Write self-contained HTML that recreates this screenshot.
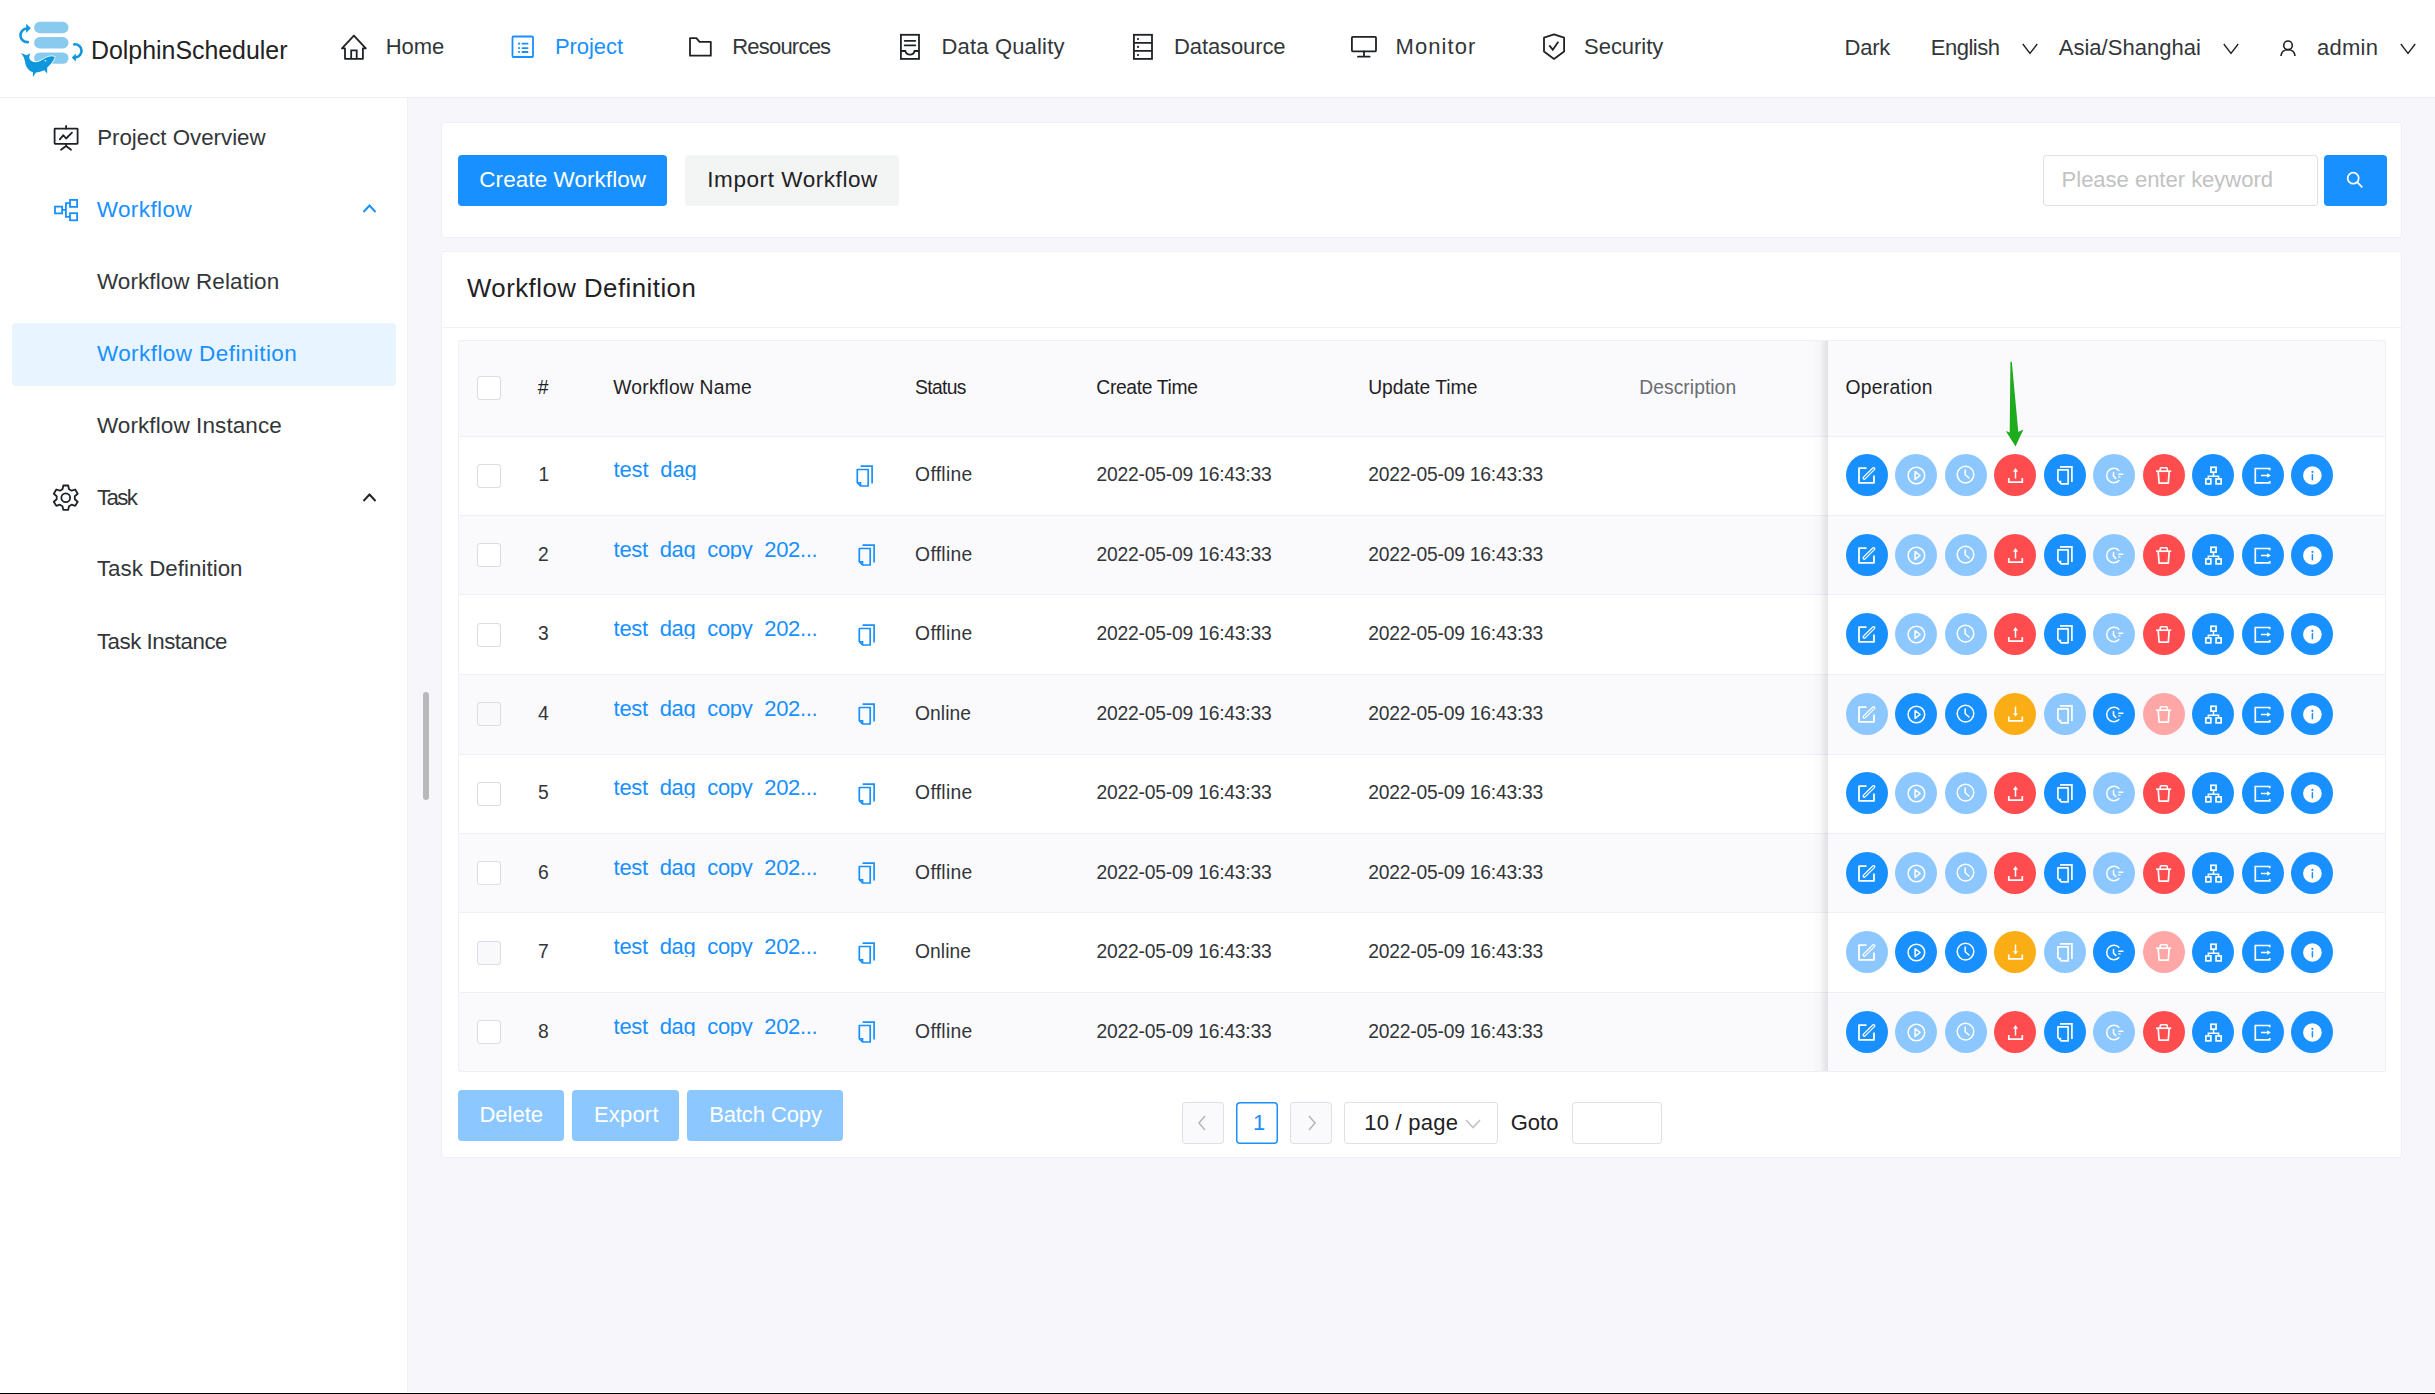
<!DOCTYPE html>
<html><head><meta charset="utf-8"><title>DolphinScheduler</title>
<style>
html,body{margin:0;padding:0;}
body{width:2435px;height:1394px;overflow:hidden;position:relative;background:#f7f6fb;font-family:"Liberation Sans", sans-serif;}
.t{position:absolute;white-space:nowrap;}
.b{position:absolute;}
.s{position:absolute;overflow:visible;}
</style></head><body>
<div class="b" style="left:0px;top:0px;width:2435px;height:97px;background:#fff;"></div>
<div class="b" style="left:0px;top:97px;width:2435px;height:1px;background:#efeff5;"></div>
<div class="b" style="left:0px;top:98px;width:407px;height:1296px;background:#fff;"></div>
<div class="b" style="left:407px;top:98px;width:1px;height:1296px;background:#efeff5;"></div>
<div class="b" style="left:423px;top:692px;width:6px;height:108px;background:#b9b9bc;border-radius:3px;"></div>
<svg class="s" style="left:0px;top:0px;" width="90" height="90" viewBox="0 0 90 90">
<rect x="34.1" y="21.8" width="34.4" height="11.4" rx="5.7" fill="#89cbee"/>
<rect x="34.1" y="37.1" width="34.4" height="11.4" rx="5.7" fill="#89cbee"/>
<rect x="34.1" y="52.4" width="34.4" height="11.4" rx="5.7" fill="#89cbee"/>
<path d="M27.8 42.1 A 6.8 6.8 0 1 1 26.8 28.5" fill="none" stroke="#0f97dd" stroke-width="2.6" stroke-linecap="round"/>
<path d="M26.3 23.8 L30.8 28.3 L26 32.9 Z" fill="#0f97dd"/>
<path d="M74.3 44.3 A 6.5 6.5 0 1 1 75.6 57.4" fill="none" stroke="#0f97dd" stroke-width="2.6" stroke-linecap="round"/>
<path d="M71.8 57.5 L75.8 53.5 L75.8 61.8 Z" fill="#0f97dd"/>
<path d="M21 52.9 L26.5 55.3 L30 53.2 L29.2 57.8 C30 60.8 32.5 62.3 36 62.2 C39.5 62 42 60 45 58.3 C48 56.5 51.5 55.5 54.8 56.8 C54 60.5 51 64.5 47.2 67.5 L47.2 73.4 L44.2 70.3 C41.5 71.5 38.5 72.3 36 72.6 L32.8 76.9 L33 72.3 C29.5 71.2 26.8 68.5 25.6 64.5 C25 62 24.6 59.5 23.8 57.3 Z" fill="#0f97dd" stroke="#fff" stroke-width="1.3" paint-order="stroke"/>
<circle cx="45.4" cy="60.8" r="0.8" fill="#fff"/>
</svg>
<div class="t" style="left:91.0px;top:37.72px;font-size:24.9px;line-height:24.9px;color:#222;letter-spacing:-0.004px;">DolphinScheduler</div>
<svg class="s" style="left:341px;top:30px;" width="26" height="30" viewBox="0 0 26 30"><path d="M4 18.4 H1 L12.9 5.6 L24.8 18.4 H21.9 V28.8 H4 Z" fill="none" stroke="#1f2225" stroke-width="1.8" stroke-linejoin="round"/><path d="M10.2 28.8 V20.3 H15.7 V28.8" fill="none" stroke="#1f2225" stroke-width="1.8"/></svg>
<div class="t" style="left:385.8px;top:35.58px;font-size:22px;line-height:22px;color:#333639;letter-spacing:-0.065px;">Home</div>
<svg class="s" style="left:511px;top:35px;" width="24" height="24" viewBox="0 0 24 24"><rect x="1.5" y="1.5" width="20.5" height="20.5" rx="1" fill="none" stroke="#1890ff" stroke-width="1.8"/><circle cx="8" cy="8.7" r="1.1" fill="#1890ff"/><circle cx="8" cy="13.1" r="1.1" fill="#1890ff"/><circle cx="8" cy="17" r="1.1" fill="#1890ff"/><path d="M11.4 8.7 H16.6 M11.4 13.1 H16.6 M11.4 17 H16.6" stroke="#1890ff" stroke-width="1.8" stroke-linecap="round"/></svg>
<div class="t" style="left:555.0px;top:35.58px;font-size:22px;line-height:22px;color:#1890ff;letter-spacing:-0.077px;">Project</div>
<svg class="s" style="left:688px;top:36px;" width="25" height="22" viewBox="0 0 25 22"><path d="M2 2.2 H8.4 L11.5 5.9 H22.8 V19.7 H2 Z" fill="none" stroke="#1f2225" stroke-width="1.8" stroke-linejoin="round"/></svg>
<div class="t" style="left:732.2px;top:35.58px;font-size:22px;line-height:22px;color:#333639;letter-spacing:-0.783px;">Resources</div>
<svg class="s" style="left:899px;top:33px;" width="22" height="28" viewBox="0 0 22 28"><rect x="1.9" y="1.8" width="18.1" height="24.1" fill="none" stroke="#1f2225" stroke-width="1.8"/><path d="M5.7 7.8 H16.3 M5.7 12.4 H16.3" stroke="#1f2225" stroke-width="1.8" stroke-linecap="round"/><path d="M1.9 18 H6.3 C7 20.5 8.5 21.7 11 21.7 C13.5 21.7 15 20.5 15.6 18 H20" fill="none" stroke="#1f2225" stroke-width="1.8"/></svg>
<div class="t" style="left:941.5px;top:35.58px;font-size:22px;line-height:22px;color:#333639;letter-spacing:0.169px;">Data Quality</div>
<svg class="s" style="left:1132px;top:33px;" width="22" height="28" viewBox="0 0 22 28"><rect x="1.9" y="1.8" width="18.1" height="24.1" fill="none" stroke="#1f2225" stroke-width="1.8"/><path d="M1.9 9.9 H20 M1.9 17.9 H20" stroke="#1f2225" stroke-width="1.8"/><circle cx="6" cy="6" r="1.1" fill="#1f2225"/><circle cx="6" cy="13.9" r="1.1" fill="#1f2225"/><circle cx="6" cy="22" r="1.1" fill="#1f2225"/></svg>
<div class="t" style="left:1174.0px;top:35.58px;font-size:22px;line-height:22px;color:#333639;letter-spacing:-0.101px;">Datasource</div>
<svg class="s" style="left:1350px;top:35px;" width="28" height="24" viewBox="0 0 28 24"><rect x="1.9" y="1.9" width="24.1" height="14.4" rx="0.8" fill="none" stroke="#1f2225" stroke-width="1.8"/><path d="M14 16.3 V21.7 M8 21.7 H19.6" stroke="#1f2225" stroke-width="1.8" stroke-linecap="round"/></svg>
<div class="t" style="left:1395.5px;top:35.58px;font-size:22px;line-height:22px;color:#333639;letter-spacing:1.072px;">Monitor</div>
<svg class="s" style="left:1542px;top:33px;" width="24" height="28" viewBox="0 0 24 28"><path d="M12 1.4 L22.1 4.7 V18.6 L12 25.9 L2 18.6 V4.7 Z" fill="none" stroke="#1f2225" stroke-width="1.8" stroke-linejoin="round"/><path d="M7.3 12.4 L10.8 16.8 L16.3 8.8" fill="none" stroke="#1f2225" stroke-width="1.8"/></svg>
<div class="t" style="left:1584.1px;top:35.58px;font-size:22px;line-height:22px;color:#333639;letter-spacing:-0.052px;">Security</div>
<div class="t" style="left:1844.5px;top:37.18px;font-size:22px;line-height:22px;color:#333639;letter-spacing:-0.195px;">Dark</div>
<div class="t" style="left:1930.8px;top:37.18px;font-size:22px;line-height:22px;color:#333639;letter-spacing:-0.493px;">English</div>
<svg class="s" style="left:2021.5px;top:43px;" width="16" height="12" viewBox="0 0 16 12"><path d="M0.8 1 L8 10.4 L15.2 1" fill="none" stroke="#1f2225" stroke-width="1.4"/></svg>
<div class="t" style="left:2058.7px;top:37.18px;font-size:22px;line-height:22px;color:#333639;letter-spacing:0.035px;">Asia/Shanghai</div>
<svg class="s" style="left:2222.5px;top:43px;" width="16" height="12" viewBox="0 0 16 12"><path d="M0.8 1 L8 10.4 L15.2 1" fill="none" stroke="#1f2225" stroke-width="1.4"/></svg>
<svg class="s" style="left:2279.5px;top:40px;" width="16" height="17" viewBox="0 0 16 17"><circle cx="8" cy="5.3" r="4.3" fill="none" stroke="#1f2225" stroke-width="1.6"/><path d="M1 16 C1.5 11.5 4.5 9.8 8 9.8 C11.5 9.8 14.5 11.5 15 16" fill="none" stroke="#1f2225" stroke-width="1.6"/></svg>
<div class="t" style="left:2316.9px;top:37.18px;font-size:22px;line-height:22px;color:#333639;letter-spacing:0.293px;">admin</div>
<svg class="s" style="left:2399.5px;top:43px;" width="16" height="12" viewBox="0 0 16 12"><path d="M0.8 1 L8 10.4 L15.2 1" fill="none" stroke="#1f2225" stroke-width="1.4"/></svg>
<svg class="s" style="left:53px;top:125px;" width="27" height="27" viewBox="0 0 27 27"><rect x="1.6" y="3.6" width="23" height="15.2" rx="0.5" fill="none" stroke="#1f2225" stroke-width="1.8"/><path d="M13.1 1 V3.6 M13.1 18.8 V21 L8 24.7 M13.1 21 L18 24.7" fill="none" stroke="#1f2225" stroke-width="1.8" stroke-linecap="round"/><path d="M6.8 14.4 L10.4 10.2 L13.1 13.5 L19 7.6" fill="none" stroke="#1f2225" stroke-width="1.8" stroke-linecap="round" stroke-linejoin="round"/></svg>
<div class="t" style="left:97.2px;top:127.12px;font-size:22.3px;line-height:22.3px;color:#333639;letter-spacing:-0.006px;">Project Overview</div>
<svg class="s" style="left:53px;top:199px;" width="27" height="23" viewBox="0 0 27 23"><rect x="2" y="7.6" width="7.1" height="6.8" fill="none" stroke="#1890ff" stroke-width="1.8"/><rect x="17" y="0.9" width="7.1" height="7" fill="none" stroke="#1890ff" stroke-width="1.8"/><rect x="17" y="14.2" width="7.1" height="7.1" fill="none" stroke="#1890ff" stroke-width="1.8"/><path d="M9.1 10.8 H12.9 M17 4.2 H12.9 V17.8 H17" fill="none" stroke="#1890ff" stroke-width="1.8"/></svg>
<div class="t" style="left:96.7px;top:198.95px;font-size:22.5px;line-height:22.5px;color:#1890ff;letter-spacing:0.420px;">Workflow</div>
<svg class="s" style="left:361.5px;top:203px;" width="15" height="12" viewBox="0 0 15 12"><path d="M1.5 9 L7.5 2.5 L13.5 9" fill="none" stroke="#1890ff" stroke-width="1.9"/></svg>
<div class="t" style="left:96.9px;top:271.35px;font-size:22.5px;line-height:22.5px;color:#333639;letter-spacing:0.087px;">Workflow Relation</div>
<div class="b" style="left:12px;top:323px;width:384px;height:63px;background:#e8f4ff;border-radius:4px;"></div>
<div class="t" style="left:96.9px;top:342.75px;font-size:22.5px;line-height:22.5px;color:#1890ff;letter-spacing:0.431px;">Workflow Definition</div>
<div class="t" style="left:96.9px;top:414.75px;font-size:22.5px;line-height:22.5px;color:#333639;letter-spacing:0.094px;">Workflow Instance</div>
<svg class="s" style="left:53.3px;top:484.3px;" width="26" height="28" viewBox="0 0 26 28"><path d="M10.3 1.5 H15.2 L16 5.2 L18.6 6.7 L22.2 5.5 L24.7 9.7 L21.8 12.2 V15.2 L24.7 17.7 L22.2 21.9 L18.6 20.7 L16 22.2 L15.2 25.9 H10.3 L9.5 22.2 L6.9 20.7 L3.3 21.9 L0.8 17.7 L3.7 15.2 V12.2 L0.8 9.7 L3.3 5.5 L6.9 6.7 L9.5 5.2 Z" fill="none" stroke="#1f2225" stroke-width="1.8" stroke-linejoin="round"/><circle cx="12.75" cy="13.7" r="4.4" fill="none" stroke="#1f2225" stroke-width="1.8"/></svg>
<div class="t" style="left:96.9px;top:487.12px;font-size:22.3px;line-height:22.3px;color:#333639;letter-spacing:-1.631px;">Task</div>
<svg class="s" style="left:361.5px;top:491.5px;" width="15" height="12" viewBox="0 0 15 12"><path d="M1.5 9 L7.5 2.5 L13.5 9" fill="none" stroke="#1f2225" stroke-width="1.9"/></svg>
<div class="t" style="left:96.9px;top:558.42px;font-size:22.3px;line-height:22.3px;color:#333639;letter-spacing:0.042px;">Task Definition</div>
<div class="t" style="left:96.9px;top:630.62px;font-size:22.3px;line-height:22.3px;color:#333639;letter-spacing:-0.479px;">Task Instance</div>
<div class="b" style="left:441px;top:122px;width:1961px;height:116px;background:#fff;box-shadow:inset 0 0 0 1px #efeff5;border-radius:4px;"></div>
<div class="b" style="left:441px;top:251px;width:1961px;height:907px;background:#fff;box-shadow:inset 0 0 0 1px #efeff5;border-radius:4px;"></div>
<div class="b" style="left:458px;top:155px;width:209px;height:51px;background:#1890ff;border-radius:4px;"></div>
<div class="t" style="left:479.3px;top:169.05px;font-size:22.5px;line-height:22.5px;color:#fff;letter-spacing:0.062px;">Create Workflow</div>
<div class="b" style="left:685px;top:155px;width:214px;height:51px;background:#f3f4f4;border-radius:4px;"></div>
<div class="t" style="left:707.3px;top:169.05px;font-size:22.5px;line-height:22.5px;color:#1f2225;letter-spacing:0.566px;">Import Workflow</div>
<div class="b" style="left:2043px;top:155px;width:275px;height:51px;background:#fff;box-shadow:inset 0 0 0 1px #e0e0e6;border-radius:4px;"></div>
<div class="t" style="left:2061.6px;top:168.58px;font-size:22px;line-height:22px;color:#c2c2c2;letter-spacing:-0.008px;">Please enter keyword</div>
<div class="b" style="left:2324px;top:155px;width:63px;height:51px;background:#1890ff;border-radius:4px;"></div>
<svg class="s" style="left:2346px;top:171px;" width="18" height="18" viewBox="0 0 18 18"><circle cx="7.2" cy="7.2" r="5.5" fill="none" stroke="#fff" stroke-width="1.7"/><path d="M11.2 11.2 L16.3 16.3" stroke="#fff" stroke-width="1.7"/></svg>
<div class="t" style="left:467.0px;top:275.76px;font-size:25.8px;line-height:25.8px;color:#1f2225;letter-spacing:0.470px;">Workflow Definition</div>
<div class="b" style="left:443px;top:327px;width:1958px;height:1px;background:#efeff5;"></div>
<div class="b" style="left:458px;top:340px;width:1928px;height:732px;background:#fff;box-shadow:inset 0 0 0 1px #efeff5;border-radius:4px;overflow:hidden;"></div>
<div class="b" style="left:459px;top:341px;width:1926px;height:95px;background:#fafafc;border-radius:3px 3px 0 0;"></div>
<div class="b" style="left:459px;top:436px;width:1926px;height:1px;background:#efeff5;"></div>
<div class="b" style="left:459px;top:515px;width:1926px;height:79px;background:#fafafc;"></div>
<div class="b" style="left:459px;top:515px;width:1926px;height:1px;background:#efeff5;"></div>
<div class="b" style="left:459px;top:594px;width:1926px;height:1px;background:#efeff5;"></div>
<div class="b" style="left:459px;top:674px;width:1926px;height:80px;background:#fafafc;"></div>
<div class="b" style="left:459px;top:674px;width:1926px;height:1px;background:#efeff5;"></div>
<div class="b" style="left:459px;top:754px;width:1926px;height:1px;background:#efeff5;"></div>
<div class="b" style="left:459px;top:833px;width:1926px;height:79px;background:#fafafc;"></div>
<div class="b" style="left:459px;top:833px;width:1926px;height:1px;background:#efeff5;"></div>
<div class="b" style="left:459px;top:912px;width:1926px;height:1px;background:#efeff5;"></div>
<div class="b" style="left:459px;top:992px;width:1926px;height:80px;background:#fafafc;"></div>
<div class="b" style="left:459px;top:992px;width:1926px;height:1px;background:#efeff5;"></div>
<div class="b" style="left:458px;top:340px;width:1928px;height:732px;box-shadow:inset 0 0 0 1px #efeff5;border-radius:4px;"></div>
<div class="b" style="left:1812px;top:341px;width:15.5px;height:730px;background:linear-gradient(to right, rgba(0,0,30,0), rgba(0,0,30,0.02) 50%, rgba(0,0,30,0.1));"></div>
<div class="b" style="left:477px;top:376px;width:24px;height:24px;background:#fff;box-shadow:inset 0 0 0 1px #dcdce2;border-radius:3.5px;"></div>
<div class="t" style="left:537.7px;top:377.56px;font-size:19.3px;line-height:19.3px;color:#1f2225;letter-spacing:0.000px;">#</div>
<div class="t" style="left:613.2px;top:377.56px;font-size:19.3px;line-height:19.3px;color:#1f2225;letter-spacing:0.237px;">Workflow Name</div>
<div class="t" style="left:915.1px;top:377.56px;font-size:19.3px;line-height:19.3px;color:#1f2225;letter-spacing:-0.663px;">Status</div>
<div class="t" style="left:1096.3px;top:377.56px;font-size:19.3px;line-height:19.3px;color:#1f2225;letter-spacing:-0.331px;">Create Time</div>
<div class="t" style="left:1368.2px;top:377.56px;font-size:19.3px;line-height:19.3px;color:#1f2225;letter-spacing:-0.011px;">Update Time</div>
<div class="t" style="left:1639.3px;top:377.56px;font-size:19.3px;line-height:19.3px;color:#6b6e72;letter-spacing:0.036px;">Description</div>
<div class="t" style="left:1845.6px;top:377.56px;font-size:19.3px;line-height:19.3px;color:#1f2225;letter-spacing:0.279px;">Operation</div>
<div class="b" style="left:477px;top:464px;width:24px;height:24px;background:#fff;box-shadow:inset 0 0 0 1px #dcdce2;border-radius:3.5px;"></div>
<div class="t" style="left:538.5px;top:465.11px;font-size:19.3px;line-height:19.3px;color:#333639;">1</div>
<div class="t" style="left:613.60px;top:459.13px;height:20.72px;overflow:hidden;font-size:22px;line-height:22px;letter-spacing:-0.185px;color:#1890ff;">test_dag</div>
<svg class="s" style="left:855.5px;top:465px;" width="18" height="23" viewBox="0 0 18 23"><path d="M4.6 1.1 H16.1 V18.4" fill="none" stroke="#1890ff" stroke-width="1.7"/><path d="M1.3 4.5 H12.2 V21 H4.6 L1.3 17.7 Z" fill="none" stroke="#1890ff" stroke-width="1.7" stroke-linejoin="round"/><path d="M1.3 17.7 H4.6 V21" fill="none" stroke="#1890ff" stroke-width="1.5"/></svg>
<div class="t" style="left:915.1px;top:465.41px;font-size:19.3px;line-height:19.3px;color:#333639;letter-spacing:0.295px;">Offline</div>
<div class="t" style="left:1096.6px;top:465.41px;font-size:19.3px;line-height:19.3px;color:#333639;letter-spacing:-0.218px;">2022-05-09 16:43:33</div>
<div class="t" style="left:1368.2px;top:465.41px;font-size:19.3px;line-height:19.3px;color:#333639;letter-spacing:-0.218px;">2022-05-09 16:43:33</div>
<svg class="s" style="left:1846px;top:454.0px;" width="42" height="42" viewBox="0 0 42 42"><circle cx="21" cy="21" r="21" fill="#1890ff"/><g transform="translate(0,-0.9)"><path d="M20.5 15.1 H13 V29.7 H28 V22.3" fill="none" stroke="#fff" stroke-width="1.8" stroke-linejoin="round"/><path d="M18.3 24.9 L27.6 15.7" stroke="#fff" stroke-width="3.6" stroke-linecap="round"/><path d="M18.3 24.9 L27.6 15.7" stroke="#1890ff" stroke-width="1.1" stroke-linecap="round"/></g></svg>
<svg class="s" style="left:1895px;top:454.0px;" width="42" height="42" viewBox="0 0 42 42"><circle cx="21" cy="21" r="21" fill="#8cc8ff"/><g transform="translate(0,-0.9)"><circle cx="21.4" cy="22.4" r="8.3" fill="none" stroke="#fff" stroke-width="1.5"/><path d="M20.1 18.6 V26.3 L25.1 22.4 Z" fill="none" stroke="#fff" stroke-width="1.5" stroke-linejoin="round"/></g></svg>
<svg class="s" style="left:1945px;top:454.0px;" width="42" height="42" viewBox="0 0 42 42"><circle cx="21" cy="21" r="21" fill="#8cc8ff"/><g transform="translate(0,-0.9)"><circle cx="20.5" cy="21.5" r="8.3" fill="none" stroke="#fff" stroke-width="1.5"/><path d="M20.2 17 V21.6 L24 24.9" fill="none" stroke="#fff" stroke-width="1.5" stroke-linecap="round"/></g></svg>
<svg class="s" style="left:1994px;top:454.0px;" width="42" height="42" viewBox="0 0 42 42"><circle cx="21" cy="21" r="21" fill="#ff4d4f"/><g transform="translate(0,-0.9)"><path d="M14.8 24.8 V29 H28.3 V24.8" fill="none" stroke="#fff" stroke-width="1.7"/><path d="M21.5 25.5 V17.5" stroke="#fff" stroke-width="1.5"/><path d="M21.5 15 L24 18.6 H19 Z" fill="#fff"/></g></svg>
<svg class="s" style="left:2044px;top:454.0px;" width="42" height="42" viewBox="0 0 42 42"><circle cx="21" cy="21" r="21" fill="#1890ff"/><g transform="translate(0,-0.9)"><path d="M16 13.8 H27.9 V29" fill="none" stroke="#fff" stroke-width="1.7"/><path d="M13.9 16.8 H24.1 V30.8 H17.3 L13.9 27.4 Z" fill="none" stroke="#fff" stroke-width="1.7" stroke-linejoin="round"/><circle cx="16.4" cy="28.4" r="0.9" fill="#fff"/></g></svg>
<svg class="s" style="left:2093px;top:454.0px;" width="42" height="42" viewBox="0 0 42 42"><circle cx="21" cy="21" r="21" fill="#8cc8ff"/><g transform="translate(0,-0.9)"><path d="M26.3 17.6 A 7.2 7.2 0 1 0 26.3 27.2" fill="none" stroke="#fff" stroke-width="1.5"/><path d="M20.5 19.3 V23 L22.8 25.4" fill="none" stroke="#fff" stroke-width="1.5" stroke-linecap="round"/><path d="M25.3 21.1 H30.4 M25.3 23.8 H27.6" stroke="#fff" stroke-width="1.4"/></g></svg>
<svg class="s" style="left:2143px;top:454.0px;" width="42" height="42" viewBox="0 0 42 42"><circle cx="21" cy="21" r="21" fill="#ff4d4f"/><g transform="translate(0,-0.9)"><path d="M13 18.1 H28.2" stroke="#fff" stroke-width="1.7"/><path d="M17.2 18.1 V15.6 Q17.2 14.6 18.2 14.6 H23.3 Q24.3 14.6 24.3 15.6 V18.1" fill="none" stroke="#fff" stroke-width="1.5"/><path d="M15.2 18.1 L16.1 30.1 H25.3 L26.2 18.1" fill="none" stroke="#fff" stroke-width="1.7" stroke-linejoin="round"/></g></svg>
<svg class="s" style="left:2192px;top:454.0px;" width="42" height="42" viewBox="0 0 42 42"><circle cx="21" cy="21" r="21" fill="#1890ff"/><g transform="translate(0,-0.9)"><rect x="18.95" y="14.15" width="5.1" height="4.9" fill="none" stroke="#fff" stroke-width="1.7"/><rect x="13.85" y="25.85" width="5" height="4.9" fill="none" stroke="#fff" stroke-width="1.7"/><rect x="24.05" y="25.85" width="5.1" height="4.9" fill="none" stroke="#fff" stroke-width="1.7"/><path d="M21.5 19.9 V23.2 M16.35 25 V23.2 H26.6 V25" fill="none" stroke="#fff" stroke-width="1.5"/></g></svg>
<svg class="s" style="left:2242px;top:454.0px;" width="42" height="42" viewBox="0 0 42 42"><circle cx="21" cy="21" r="21" fill="#1890ff"/><g transform="translate(0,-0.9)"><path d="M27.7 17.2 V15.4 H13.3 V29.8 H27.7 V27.9" fill="none" stroke="#fff" stroke-width="1.7"/><path d="M19 22.4 H26" stroke="#fff" stroke-width="1.5"/><path d="M28.9 22.4 L25.2 20.2 V24.7 Z" fill="#fff"/></g></svg>
<svg class="s" style="left:2291px;top:454.0px;" width="42" height="42" viewBox="0 0 42 42"><circle cx="21" cy="21" r="21" fill="#1890ff"/><g transform="translate(0,-0.9)"><circle cx="21.4" cy="22.4" r="9.3" fill="#fff"/><circle cx="21.4" cy="18.8" r="1.05" fill="#1890ff"/><path d="M21.4 21.6 V26.7" stroke="#1890ff" stroke-width="1.5" stroke-linecap="round"/></g></svg>
<div class="b" style="left:477px;top:543px;width:24px;height:24px;background:#fff;box-shadow:inset 0 0 0 1px #dcdce2;border-radius:3.5px;"></div>
<div class="t" style="left:538px;top:544.61px;font-size:19.3px;line-height:19.3px;color:#333639;">2</div>
<div class="t" style="left:613.60px;top:538.63px;height:20.72px;overflow:hidden;font-size:22px;line-height:22px;letter-spacing:-0.331px;color:#1890ff;">test_dag_copy_202...</div>
<svg class="s" style="left:858.3px;top:544px;" width="18" height="23" viewBox="0 0 18 23"><path d="M4.6 1.1 H16.1 V18.4" fill="none" stroke="#1890ff" stroke-width="1.7"/><path d="M1.3 4.5 H12.2 V21 H4.6 L1.3 17.7 Z" fill="none" stroke="#1890ff" stroke-width="1.7" stroke-linejoin="round"/><path d="M1.3 17.7 H4.6 V21" fill="none" stroke="#1890ff" stroke-width="1.5"/></svg>
<div class="t" style="left:915.1px;top:544.91px;font-size:19.3px;line-height:19.3px;color:#333639;letter-spacing:0.295px;">Offline</div>
<div class="t" style="left:1096.6px;top:544.91px;font-size:19.3px;line-height:19.3px;color:#333639;letter-spacing:-0.218px;">2022-05-09 16:43:33</div>
<div class="t" style="left:1368.2px;top:544.91px;font-size:19.3px;line-height:19.3px;color:#333639;letter-spacing:-0.218px;">2022-05-09 16:43:33</div>
<svg class="s" style="left:1846px;top:534.0px;" width="42" height="42" viewBox="0 0 42 42"><circle cx="21" cy="21" r="21" fill="#1890ff"/><g transform="translate(0,-0.9)"><path d="M20.5 15.1 H13 V29.7 H28 V22.3" fill="none" stroke="#fff" stroke-width="1.8" stroke-linejoin="round"/><path d="M18.3 24.9 L27.6 15.7" stroke="#fff" stroke-width="3.6" stroke-linecap="round"/><path d="M18.3 24.9 L27.6 15.7" stroke="#1890ff" stroke-width="1.1" stroke-linecap="round"/></g></svg>
<svg class="s" style="left:1895px;top:534.0px;" width="42" height="42" viewBox="0 0 42 42"><circle cx="21" cy="21" r="21" fill="#8cc8ff"/><g transform="translate(0,-0.9)"><circle cx="21.4" cy="22.4" r="8.3" fill="none" stroke="#fff" stroke-width="1.5"/><path d="M20.1 18.6 V26.3 L25.1 22.4 Z" fill="none" stroke="#fff" stroke-width="1.5" stroke-linejoin="round"/></g></svg>
<svg class="s" style="left:1945px;top:534.0px;" width="42" height="42" viewBox="0 0 42 42"><circle cx="21" cy="21" r="21" fill="#8cc8ff"/><g transform="translate(0,-0.9)"><circle cx="20.5" cy="21.5" r="8.3" fill="none" stroke="#fff" stroke-width="1.5"/><path d="M20.2 17 V21.6 L24 24.9" fill="none" stroke="#fff" stroke-width="1.5" stroke-linecap="round"/></g></svg>
<svg class="s" style="left:1994px;top:534.0px;" width="42" height="42" viewBox="0 0 42 42"><circle cx="21" cy="21" r="21" fill="#ff4d4f"/><g transform="translate(0,-0.9)"><path d="M14.8 24.8 V29 H28.3 V24.8" fill="none" stroke="#fff" stroke-width="1.7"/><path d="M21.5 25.5 V17.5" stroke="#fff" stroke-width="1.5"/><path d="M21.5 15 L24 18.6 H19 Z" fill="#fff"/></g></svg>
<svg class="s" style="left:2044px;top:534.0px;" width="42" height="42" viewBox="0 0 42 42"><circle cx="21" cy="21" r="21" fill="#1890ff"/><g transform="translate(0,-0.9)"><path d="M16 13.8 H27.9 V29" fill="none" stroke="#fff" stroke-width="1.7"/><path d="M13.9 16.8 H24.1 V30.8 H17.3 L13.9 27.4 Z" fill="none" stroke="#fff" stroke-width="1.7" stroke-linejoin="round"/><circle cx="16.4" cy="28.4" r="0.9" fill="#fff"/></g></svg>
<svg class="s" style="left:2093px;top:534.0px;" width="42" height="42" viewBox="0 0 42 42"><circle cx="21" cy="21" r="21" fill="#8cc8ff"/><g transform="translate(0,-0.9)"><path d="M26.3 17.6 A 7.2 7.2 0 1 0 26.3 27.2" fill="none" stroke="#fff" stroke-width="1.5"/><path d="M20.5 19.3 V23 L22.8 25.4" fill="none" stroke="#fff" stroke-width="1.5" stroke-linecap="round"/><path d="M25.3 21.1 H30.4 M25.3 23.8 H27.6" stroke="#fff" stroke-width="1.4"/></g></svg>
<svg class="s" style="left:2143px;top:534.0px;" width="42" height="42" viewBox="0 0 42 42"><circle cx="21" cy="21" r="21" fill="#ff4d4f"/><g transform="translate(0,-0.9)"><path d="M13 18.1 H28.2" stroke="#fff" stroke-width="1.7"/><path d="M17.2 18.1 V15.6 Q17.2 14.6 18.2 14.6 H23.3 Q24.3 14.6 24.3 15.6 V18.1" fill="none" stroke="#fff" stroke-width="1.5"/><path d="M15.2 18.1 L16.1 30.1 H25.3 L26.2 18.1" fill="none" stroke="#fff" stroke-width="1.7" stroke-linejoin="round"/></g></svg>
<svg class="s" style="left:2192px;top:534.0px;" width="42" height="42" viewBox="0 0 42 42"><circle cx="21" cy="21" r="21" fill="#1890ff"/><g transform="translate(0,-0.9)"><rect x="18.95" y="14.15" width="5.1" height="4.9" fill="none" stroke="#fff" stroke-width="1.7"/><rect x="13.85" y="25.85" width="5" height="4.9" fill="none" stroke="#fff" stroke-width="1.7"/><rect x="24.05" y="25.85" width="5.1" height="4.9" fill="none" stroke="#fff" stroke-width="1.7"/><path d="M21.5 19.9 V23.2 M16.35 25 V23.2 H26.6 V25" fill="none" stroke="#fff" stroke-width="1.5"/></g></svg>
<svg class="s" style="left:2242px;top:534.0px;" width="42" height="42" viewBox="0 0 42 42"><circle cx="21" cy="21" r="21" fill="#1890ff"/><g transform="translate(0,-0.9)"><path d="M27.7 17.2 V15.4 H13.3 V29.8 H27.7 V27.9" fill="none" stroke="#fff" stroke-width="1.7"/><path d="M19 22.4 H26" stroke="#fff" stroke-width="1.5"/><path d="M28.9 22.4 L25.2 20.2 V24.7 Z" fill="#fff"/></g></svg>
<svg class="s" style="left:2291px;top:534.0px;" width="42" height="42" viewBox="0 0 42 42"><circle cx="21" cy="21" r="21" fill="#1890ff"/><g transform="translate(0,-0.9)"><circle cx="21.4" cy="22.4" r="9.3" fill="#fff"/><circle cx="21.4" cy="18.8" r="1.05" fill="#1890ff"/><path d="M21.4 21.6 V26.7" stroke="#1890ff" stroke-width="1.5" stroke-linecap="round"/></g></svg>
<div class="b" style="left:477px;top:623px;width:24px;height:24px;background:#fff;box-shadow:inset 0 0 0 1px #dcdce2;border-radius:3.5px;"></div>
<div class="t" style="left:538px;top:624.11px;font-size:19.3px;line-height:19.3px;color:#333639;">3</div>
<div class="t" style="left:613.60px;top:618.13px;height:20.72px;overflow:hidden;font-size:22px;line-height:22px;letter-spacing:-0.331px;color:#1890ff;">test_dag_copy_202...</div>
<svg class="s" style="left:858.3px;top:624px;" width="18" height="23" viewBox="0 0 18 23"><path d="M4.6 1.1 H16.1 V18.4" fill="none" stroke="#1890ff" stroke-width="1.7"/><path d="M1.3 4.5 H12.2 V21 H4.6 L1.3 17.7 Z" fill="none" stroke="#1890ff" stroke-width="1.7" stroke-linejoin="round"/><path d="M1.3 17.7 H4.6 V21" fill="none" stroke="#1890ff" stroke-width="1.5"/></svg>
<div class="t" style="left:915.1px;top:624.41px;font-size:19.3px;line-height:19.3px;color:#333639;letter-spacing:0.295px;">Offline</div>
<div class="t" style="left:1096.6px;top:624.41px;font-size:19.3px;line-height:19.3px;color:#333639;letter-spacing:-0.218px;">2022-05-09 16:43:33</div>
<div class="t" style="left:1368.2px;top:624.41px;font-size:19.3px;line-height:19.3px;color:#333639;letter-spacing:-0.218px;">2022-05-09 16:43:33</div>
<svg class="s" style="left:1846px;top:613.0px;" width="42" height="42" viewBox="0 0 42 42"><circle cx="21" cy="21" r="21" fill="#1890ff"/><g transform="translate(0,-0.9)"><path d="M20.5 15.1 H13 V29.7 H28 V22.3" fill="none" stroke="#fff" stroke-width="1.8" stroke-linejoin="round"/><path d="M18.3 24.9 L27.6 15.7" stroke="#fff" stroke-width="3.6" stroke-linecap="round"/><path d="M18.3 24.9 L27.6 15.7" stroke="#1890ff" stroke-width="1.1" stroke-linecap="round"/></g></svg>
<svg class="s" style="left:1895px;top:613.0px;" width="42" height="42" viewBox="0 0 42 42"><circle cx="21" cy="21" r="21" fill="#8cc8ff"/><g transform="translate(0,-0.9)"><circle cx="21.4" cy="22.4" r="8.3" fill="none" stroke="#fff" stroke-width="1.5"/><path d="M20.1 18.6 V26.3 L25.1 22.4 Z" fill="none" stroke="#fff" stroke-width="1.5" stroke-linejoin="round"/></g></svg>
<svg class="s" style="left:1945px;top:613.0px;" width="42" height="42" viewBox="0 0 42 42"><circle cx="21" cy="21" r="21" fill="#8cc8ff"/><g transform="translate(0,-0.9)"><circle cx="20.5" cy="21.5" r="8.3" fill="none" stroke="#fff" stroke-width="1.5"/><path d="M20.2 17 V21.6 L24 24.9" fill="none" stroke="#fff" stroke-width="1.5" stroke-linecap="round"/></g></svg>
<svg class="s" style="left:1994px;top:613.0px;" width="42" height="42" viewBox="0 0 42 42"><circle cx="21" cy="21" r="21" fill="#ff4d4f"/><g transform="translate(0,-0.9)"><path d="M14.8 24.8 V29 H28.3 V24.8" fill="none" stroke="#fff" stroke-width="1.7"/><path d="M21.5 25.5 V17.5" stroke="#fff" stroke-width="1.5"/><path d="M21.5 15 L24 18.6 H19 Z" fill="#fff"/></g></svg>
<svg class="s" style="left:2044px;top:613.0px;" width="42" height="42" viewBox="0 0 42 42"><circle cx="21" cy="21" r="21" fill="#1890ff"/><g transform="translate(0,-0.9)"><path d="M16 13.8 H27.9 V29" fill="none" stroke="#fff" stroke-width="1.7"/><path d="M13.9 16.8 H24.1 V30.8 H17.3 L13.9 27.4 Z" fill="none" stroke="#fff" stroke-width="1.7" stroke-linejoin="round"/><circle cx="16.4" cy="28.4" r="0.9" fill="#fff"/></g></svg>
<svg class="s" style="left:2093px;top:613.0px;" width="42" height="42" viewBox="0 0 42 42"><circle cx="21" cy="21" r="21" fill="#8cc8ff"/><g transform="translate(0,-0.9)"><path d="M26.3 17.6 A 7.2 7.2 0 1 0 26.3 27.2" fill="none" stroke="#fff" stroke-width="1.5"/><path d="M20.5 19.3 V23 L22.8 25.4" fill="none" stroke="#fff" stroke-width="1.5" stroke-linecap="round"/><path d="M25.3 21.1 H30.4 M25.3 23.8 H27.6" stroke="#fff" stroke-width="1.4"/></g></svg>
<svg class="s" style="left:2143px;top:613.0px;" width="42" height="42" viewBox="0 0 42 42"><circle cx="21" cy="21" r="21" fill="#ff4d4f"/><g transform="translate(0,-0.9)"><path d="M13 18.1 H28.2" stroke="#fff" stroke-width="1.7"/><path d="M17.2 18.1 V15.6 Q17.2 14.6 18.2 14.6 H23.3 Q24.3 14.6 24.3 15.6 V18.1" fill="none" stroke="#fff" stroke-width="1.5"/><path d="M15.2 18.1 L16.1 30.1 H25.3 L26.2 18.1" fill="none" stroke="#fff" stroke-width="1.7" stroke-linejoin="round"/></g></svg>
<svg class="s" style="left:2192px;top:613.0px;" width="42" height="42" viewBox="0 0 42 42"><circle cx="21" cy="21" r="21" fill="#1890ff"/><g transform="translate(0,-0.9)"><rect x="18.95" y="14.15" width="5.1" height="4.9" fill="none" stroke="#fff" stroke-width="1.7"/><rect x="13.85" y="25.85" width="5" height="4.9" fill="none" stroke="#fff" stroke-width="1.7"/><rect x="24.05" y="25.85" width="5.1" height="4.9" fill="none" stroke="#fff" stroke-width="1.7"/><path d="M21.5 19.9 V23.2 M16.35 25 V23.2 H26.6 V25" fill="none" stroke="#fff" stroke-width="1.5"/></g></svg>
<svg class="s" style="left:2242px;top:613.0px;" width="42" height="42" viewBox="0 0 42 42"><circle cx="21" cy="21" r="21" fill="#1890ff"/><g transform="translate(0,-0.9)"><path d="M27.7 17.2 V15.4 H13.3 V29.8 H27.7 V27.9" fill="none" stroke="#fff" stroke-width="1.7"/><path d="M19 22.4 H26" stroke="#fff" stroke-width="1.5"/><path d="M28.9 22.4 L25.2 20.2 V24.7 Z" fill="#fff"/></g></svg>
<svg class="s" style="left:2291px;top:613.0px;" width="42" height="42" viewBox="0 0 42 42"><circle cx="21" cy="21" r="21" fill="#1890ff"/><g transform="translate(0,-0.9)"><circle cx="21.4" cy="22.4" r="9.3" fill="#fff"/><circle cx="21.4" cy="18.8" r="1.05" fill="#1890ff"/><path d="M21.4 21.6 V26.7" stroke="#1890ff" stroke-width="1.5" stroke-linecap="round"/></g></svg>
<div class="b" style="left:477px;top:702px;width:24px;height:24px;background:#f9f9fb;box-shadow:inset 0 0 0 1px #dcdce2;border-radius:3.5px;"></div>
<div class="t" style="left:538px;top:703.61px;font-size:19.3px;line-height:19.3px;color:#333639;">4</div>
<div class="t" style="left:613.60px;top:697.63px;height:20.72px;overflow:hidden;font-size:22px;line-height:22px;letter-spacing:-0.331px;color:#1890ff;">test_dag_copy_202...</div>
<svg class="s" style="left:858.3px;top:703px;" width="18" height="23" viewBox="0 0 18 23"><path d="M4.6 1.1 H16.1 V18.4" fill="none" stroke="#1890ff" stroke-width="1.7"/><path d="M1.3 4.5 H12.2 V21 H4.6 L1.3 17.7 Z" fill="none" stroke="#1890ff" stroke-width="1.7" stroke-linejoin="round"/><path d="M1.3 17.7 H4.6 V21" fill="none" stroke="#1890ff" stroke-width="1.5"/></svg>
<div class="t" style="left:915.1px;top:703.91px;font-size:19.3px;line-height:19.3px;color:#333639;letter-spacing:0.021px;">Online</div>
<div class="t" style="left:1096.6px;top:703.91px;font-size:19.3px;line-height:19.3px;color:#333639;letter-spacing:-0.218px;">2022-05-09 16:43:33</div>
<div class="t" style="left:1368.2px;top:703.91px;font-size:19.3px;line-height:19.3px;color:#333639;letter-spacing:-0.218px;">2022-05-09 16:43:33</div>
<svg class="s" style="left:1846px;top:693.0px;" width="42" height="42" viewBox="0 0 42 42"><circle cx="21" cy="21" r="21" fill="#8cc8ff"/><g transform="translate(0,-0.9)"><path d="M20.5 15.1 H13 V29.7 H28 V22.3" fill="none" stroke="#fff" stroke-width="1.8" stroke-linejoin="round"/><path d="M18.3 24.9 L27.6 15.7" stroke="#fff" stroke-width="3.6" stroke-linecap="round"/><path d="M18.3 24.9 L27.6 15.7" stroke="#8cc8ff" stroke-width="1.1" stroke-linecap="round"/></g></svg>
<svg class="s" style="left:1895px;top:693.0px;" width="42" height="42" viewBox="0 0 42 42"><circle cx="21" cy="21" r="21" fill="#1890ff"/><g transform="translate(0,-0.9)"><circle cx="21.4" cy="22.4" r="8.3" fill="none" stroke="#fff" stroke-width="1.5"/><path d="M20.1 18.6 V26.3 L25.1 22.4 Z" fill="none" stroke="#fff" stroke-width="1.5" stroke-linejoin="round"/></g></svg>
<svg class="s" style="left:1945px;top:693.0px;" width="42" height="42" viewBox="0 0 42 42"><circle cx="21" cy="21" r="21" fill="#1890ff"/><g transform="translate(0,-0.9)"><circle cx="20.5" cy="21.5" r="8.3" fill="none" stroke="#fff" stroke-width="1.5"/><path d="M20.2 17 V21.6 L24 24.9" fill="none" stroke="#fff" stroke-width="1.5" stroke-linecap="round"/></g></svg>
<svg class="s" style="left:1994px;top:693.0px;" width="42" height="42" viewBox="0 0 42 42"><circle cx="21" cy="21" r="21" fill="#faad14"/><path d="M14.8 23.5 V27.8 H28.3 V23.5" fill="none" stroke="#fff" stroke-width="1.7"/><path d="M21.5 13.5 V21" stroke="#fff" stroke-width="1.5"/><path d="M21.5 23.6 L24 20.2 H19 Z" fill="#fff"/></svg>
<svg class="s" style="left:2044px;top:693.0px;" width="42" height="42" viewBox="0 0 42 42"><circle cx="21" cy="21" r="21" fill="#8cc8ff"/><g transform="translate(0,-0.9)"><path d="M16 13.8 H27.9 V29" fill="none" stroke="#fff" stroke-width="1.7"/><path d="M13.9 16.8 H24.1 V30.8 H17.3 L13.9 27.4 Z" fill="none" stroke="#fff" stroke-width="1.7" stroke-linejoin="round"/><circle cx="16.4" cy="28.4" r="0.9" fill="#fff"/></g></svg>
<svg class="s" style="left:2093px;top:693.0px;" width="42" height="42" viewBox="0 0 42 42"><circle cx="21" cy="21" r="21" fill="#1890ff"/><g transform="translate(0,-0.9)"><path d="M26.3 17.6 A 7.2 7.2 0 1 0 26.3 27.2" fill="none" stroke="#fff" stroke-width="1.5"/><path d="M20.5 19.3 V23 L22.8 25.4" fill="none" stroke="#fff" stroke-width="1.5" stroke-linecap="round"/><path d="M25.3 21.1 H30.4 M25.3 23.8 H27.6" stroke="#fff" stroke-width="1.4"/></g></svg>
<svg class="s" style="left:2143px;top:693.0px;" width="42" height="42" viewBox="0 0 42 42"><circle cx="21" cy="21" r="21" fill="#ffa6a7"/><g transform="translate(0,-0.9)"><path d="M13 18.1 H28.2" stroke="#fff" stroke-width="1.7"/><path d="M17.2 18.1 V15.6 Q17.2 14.6 18.2 14.6 H23.3 Q24.3 14.6 24.3 15.6 V18.1" fill="none" stroke="#fff" stroke-width="1.5"/><path d="M15.2 18.1 L16.1 30.1 H25.3 L26.2 18.1" fill="none" stroke="#fff" stroke-width="1.7" stroke-linejoin="round"/></g></svg>
<svg class="s" style="left:2192px;top:693.0px;" width="42" height="42" viewBox="0 0 42 42"><circle cx="21" cy="21" r="21" fill="#1890ff"/><g transform="translate(0,-0.9)"><rect x="18.95" y="14.15" width="5.1" height="4.9" fill="none" stroke="#fff" stroke-width="1.7"/><rect x="13.85" y="25.85" width="5" height="4.9" fill="none" stroke="#fff" stroke-width="1.7"/><rect x="24.05" y="25.85" width="5.1" height="4.9" fill="none" stroke="#fff" stroke-width="1.7"/><path d="M21.5 19.9 V23.2 M16.35 25 V23.2 H26.6 V25" fill="none" stroke="#fff" stroke-width="1.5"/></g></svg>
<svg class="s" style="left:2242px;top:693.0px;" width="42" height="42" viewBox="0 0 42 42"><circle cx="21" cy="21" r="21" fill="#1890ff"/><g transform="translate(0,-0.9)"><path d="M27.7 17.2 V15.4 H13.3 V29.8 H27.7 V27.9" fill="none" stroke="#fff" stroke-width="1.7"/><path d="M19 22.4 H26" stroke="#fff" stroke-width="1.5"/><path d="M28.9 22.4 L25.2 20.2 V24.7 Z" fill="#fff"/></g></svg>
<svg class="s" style="left:2291px;top:693.0px;" width="42" height="42" viewBox="0 0 42 42"><circle cx="21" cy="21" r="21" fill="#1890ff"/><g transform="translate(0,-0.9)"><circle cx="21.4" cy="22.4" r="9.3" fill="#fff"/><circle cx="21.4" cy="18.8" r="1.05" fill="#1890ff"/><path d="M21.4 21.6 V26.7" stroke="#1890ff" stroke-width="1.5" stroke-linecap="round"/></g></svg>
<div class="b" style="left:477px;top:782px;width:24px;height:24px;background:#fff;box-shadow:inset 0 0 0 1px #dcdce2;border-radius:3.5px;"></div>
<div class="t" style="left:538px;top:783.11px;font-size:19.3px;line-height:19.3px;color:#333639;">5</div>
<div class="t" style="left:613.60px;top:777.13px;height:20.72px;overflow:hidden;font-size:22px;line-height:22px;letter-spacing:-0.331px;color:#1890ff;">test_dag_copy_202...</div>
<svg class="s" style="left:858.3px;top:783px;" width="18" height="23" viewBox="0 0 18 23"><path d="M4.6 1.1 H16.1 V18.4" fill="none" stroke="#1890ff" stroke-width="1.7"/><path d="M1.3 4.5 H12.2 V21 H4.6 L1.3 17.7 Z" fill="none" stroke="#1890ff" stroke-width="1.7" stroke-linejoin="round"/><path d="M1.3 17.7 H4.6 V21" fill="none" stroke="#1890ff" stroke-width="1.5"/></svg>
<div class="t" style="left:915.1px;top:783.41px;font-size:19.3px;line-height:19.3px;color:#333639;letter-spacing:0.295px;">Offline</div>
<div class="t" style="left:1096.6px;top:783.41px;font-size:19.3px;line-height:19.3px;color:#333639;letter-spacing:-0.218px;">2022-05-09 16:43:33</div>
<div class="t" style="left:1368.2px;top:783.41px;font-size:19.3px;line-height:19.3px;color:#333639;letter-spacing:-0.218px;">2022-05-09 16:43:33</div>
<svg class="s" style="left:1846px;top:772.0px;" width="42" height="42" viewBox="0 0 42 42"><circle cx="21" cy="21" r="21" fill="#1890ff"/><g transform="translate(0,-0.9)"><path d="M20.5 15.1 H13 V29.7 H28 V22.3" fill="none" stroke="#fff" stroke-width="1.8" stroke-linejoin="round"/><path d="M18.3 24.9 L27.6 15.7" stroke="#fff" stroke-width="3.6" stroke-linecap="round"/><path d="M18.3 24.9 L27.6 15.7" stroke="#1890ff" stroke-width="1.1" stroke-linecap="round"/></g></svg>
<svg class="s" style="left:1895px;top:772.0px;" width="42" height="42" viewBox="0 0 42 42"><circle cx="21" cy="21" r="21" fill="#8cc8ff"/><g transform="translate(0,-0.9)"><circle cx="21.4" cy="22.4" r="8.3" fill="none" stroke="#fff" stroke-width="1.5"/><path d="M20.1 18.6 V26.3 L25.1 22.4 Z" fill="none" stroke="#fff" stroke-width="1.5" stroke-linejoin="round"/></g></svg>
<svg class="s" style="left:1945px;top:772.0px;" width="42" height="42" viewBox="0 0 42 42"><circle cx="21" cy="21" r="21" fill="#8cc8ff"/><g transform="translate(0,-0.9)"><circle cx="20.5" cy="21.5" r="8.3" fill="none" stroke="#fff" stroke-width="1.5"/><path d="M20.2 17 V21.6 L24 24.9" fill="none" stroke="#fff" stroke-width="1.5" stroke-linecap="round"/></g></svg>
<svg class="s" style="left:1994px;top:772.0px;" width="42" height="42" viewBox="0 0 42 42"><circle cx="21" cy="21" r="21" fill="#ff4d4f"/><g transform="translate(0,-0.9)"><path d="M14.8 24.8 V29 H28.3 V24.8" fill="none" stroke="#fff" stroke-width="1.7"/><path d="M21.5 25.5 V17.5" stroke="#fff" stroke-width="1.5"/><path d="M21.5 15 L24 18.6 H19 Z" fill="#fff"/></g></svg>
<svg class="s" style="left:2044px;top:772.0px;" width="42" height="42" viewBox="0 0 42 42"><circle cx="21" cy="21" r="21" fill="#1890ff"/><g transform="translate(0,-0.9)"><path d="M16 13.8 H27.9 V29" fill="none" stroke="#fff" stroke-width="1.7"/><path d="M13.9 16.8 H24.1 V30.8 H17.3 L13.9 27.4 Z" fill="none" stroke="#fff" stroke-width="1.7" stroke-linejoin="round"/><circle cx="16.4" cy="28.4" r="0.9" fill="#fff"/></g></svg>
<svg class="s" style="left:2093px;top:772.0px;" width="42" height="42" viewBox="0 0 42 42"><circle cx="21" cy="21" r="21" fill="#8cc8ff"/><g transform="translate(0,-0.9)"><path d="M26.3 17.6 A 7.2 7.2 0 1 0 26.3 27.2" fill="none" stroke="#fff" stroke-width="1.5"/><path d="M20.5 19.3 V23 L22.8 25.4" fill="none" stroke="#fff" stroke-width="1.5" stroke-linecap="round"/><path d="M25.3 21.1 H30.4 M25.3 23.8 H27.6" stroke="#fff" stroke-width="1.4"/></g></svg>
<svg class="s" style="left:2143px;top:772.0px;" width="42" height="42" viewBox="0 0 42 42"><circle cx="21" cy="21" r="21" fill="#ff4d4f"/><g transform="translate(0,-0.9)"><path d="M13 18.1 H28.2" stroke="#fff" stroke-width="1.7"/><path d="M17.2 18.1 V15.6 Q17.2 14.6 18.2 14.6 H23.3 Q24.3 14.6 24.3 15.6 V18.1" fill="none" stroke="#fff" stroke-width="1.5"/><path d="M15.2 18.1 L16.1 30.1 H25.3 L26.2 18.1" fill="none" stroke="#fff" stroke-width="1.7" stroke-linejoin="round"/></g></svg>
<svg class="s" style="left:2192px;top:772.0px;" width="42" height="42" viewBox="0 0 42 42"><circle cx="21" cy="21" r="21" fill="#1890ff"/><g transform="translate(0,-0.9)"><rect x="18.95" y="14.15" width="5.1" height="4.9" fill="none" stroke="#fff" stroke-width="1.7"/><rect x="13.85" y="25.85" width="5" height="4.9" fill="none" stroke="#fff" stroke-width="1.7"/><rect x="24.05" y="25.85" width="5.1" height="4.9" fill="none" stroke="#fff" stroke-width="1.7"/><path d="M21.5 19.9 V23.2 M16.35 25 V23.2 H26.6 V25" fill="none" stroke="#fff" stroke-width="1.5"/></g></svg>
<svg class="s" style="left:2242px;top:772.0px;" width="42" height="42" viewBox="0 0 42 42"><circle cx="21" cy="21" r="21" fill="#1890ff"/><g transform="translate(0,-0.9)"><path d="M27.7 17.2 V15.4 H13.3 V29.8 H27.7 V27.9" fill="none" stroke="#fff" stroke-width="1.7"/><path d="M19 22.4 H26" stroke="#fff" stroke-width="1.5"/><path d="M28.9 22.4 L25.2 20.2 V24.7 Z" fill="#fff"/></g></svg>
<svg class="s" style="left:2291px;top:772.0px;" width="42" height="42" viewBox="0 0 42 42"><circle cx="21" cy="21" r="21" fill="#1890ff"/><g transform="translate(0,-0.9)"><circle cx="21.4" cy="22.4" r="9.3" fill="#fff"/><circle cx="21.4" cy="18.8" r="1.05" fill="#1890ff"/><path d="M21.4 21.6 V26.7" stroke="#1890ff" stroke-width="1.5" stroke-linecap="round"/></g></svg>
<div class="b" style="left:477px;top:861px;width:24px;height:24px;background:#fff;box-shadow:inset 0 0 0 1px #dcdce2;border-radius:3.5px;"></div>
<div class="t" style="left:538px;top:862.61px;font-size:19.3px;line-height:19.3px;color:#333639;">6</div>
<div class="t" style="left:613.60px;top:856.63px;height:20.72px;overflow:hidden;font-size:22px;line-height:22px;letter-spacing:-0.331px;color:#1890ff;">test_dag_copy_202...</div>
<svg class="s" style="left:858.3px;top:862px;" width="18" height="23" viewBox="0 0 18 23"><path d="M4.6 1.1 H16.1 V18.4" fill="none" stroke="#1890ff" stroke-width="1.7"/><path d="M1.3 4.5 H12.2 V21 H4.6 L1.3 17.7 Z" fill="none" stroke="#1890ff" stroke-width="1.7" stroke-linejoin="round"/><path d="M1.3 17.7 H4.6 V21" fill="none" stroke="#1890ff" stroke-width="1.5"/></svg>
<div class="t" style="left:915.1px;top:862.91px;font-size:19.3px;line-height:19.3px;color:#333639;letter-spacing:0.295px;">Offline</div>
<div class="t" style="left:1096.6px;top:862.91px;font-size:19.3px;line-height:19.3px;color:#333639;letter-spacing:-0.218px;">2022-05-09 16:43:33</div>
<div class="t" style="left:1368.2px;top:862.91px;font-size:19.3px;line-height:19.3px;color:#333639;letter-spacing:-0.218px;">2022-05-09 16:43:33</div>
<svg class="s" style="left:1846px;top:852.0px;" width="42" height="42" viewBox="0 0 42 42"><circle cx="21" cy="21" r="21" fill="#1890ff"/><g transform="translate(0,-0.9)"><path d="M20.5 15.1 H13 V29.7 H28 V22.3" fill="none" stroke="#fff" stroke-width="1.8" stroke-linejoin="round"/><path d="M18.3 24.9 L27.6 15.7" stroke="#fff" stroke-width="3.6" stroke-linecap="round"/><path d="M18.3 24.9 L27.6 15.7" stroke="#1890ff" stroke-width="1.1" stroke-linecap="round"/></g></svg>
<svg class="s" style="left:1895px;top:852.0px;" width="42" height="42" viewBox="0 0 42 42"><circle cx="21" cy="21" r="21" fill="#8cc8ff"/><g transform="translate(0,-0.9)"><circle cx="21.4" cy="22.4" r="8.3" fill="none" stroke="#fff" stroke-width="1.5"/><path d="M20.1 18.6 V26.3 L25.1 22.4 Z" fill="none" stroke="#fff" stroke-width="1.5" stroke-linejoin="round"/></g></svg>
<svg class="s" style="left:1945px;top:852.0px;" width="42" height="42" viewBox="0 0 42 42"><circle cx="21" cy="21" r="21" fill="#8cc8ff"/><g transform="translate(0,-0.9)"><circle cx="20.5" cy="21.5" r="8.3" fill="none" stroke="#fff" stroke-width="1.5"/><path d="M20.2 17 V21.6 L24 24.9" fill="none" stroke="#fff" stroke-width="1.5" stroke-linecap="round"/></g></svg>
<svg class="s" style="left:1994px;top:852.0px;" width="42" height="42" viewBox="0 0 42 42"><circle cx="21" cy="21" r="21" fill="#ff4d4f"/><g transform="translate(0,-0.9)"><path d="M14.8 24.8 V29 H28.3 V24.8" fill="none" stroke="#fff" stroke-width="1.7"/><path d="M21.5 25.5 V17.5" stroke="#fff" stroke-width="1.5"/><path d="M21.5 15 L24 18.6 H19 Z" fill="#fff"/></g></svg>
<svg class="s" style="left:2044px;top:852.0px;" width="42" height="42" viewBox="0 0 42 42"><circle cx="21" cy="21" r="21" fill="#1890ff"/><g transform="translate(0,-0.9)"><path d="M16 13.8 H27.9 V29" fill="none" stroke="#fff" stroke-width="1.7"/><path d="M13.9 16.8 H24.1 V30.8 H17.3 L13.9 27.4 Z" fill="none" stroke="#fff" stroke-width="1.7" stroke-linejoin="round"/><circle cx="16.4" cy="28.4" r="0.9" fill="#fff"/></g></svg>
<svg class="s" style="left:2093px;top:852.0px;" width="42" height="42" viewBox="0 0 42 42"><circle cx="21" cy="21" r="21" fill="#8cc8ff"/><g transform="translate(0,-0.9)"><path d="M26.3 17.6 A 7.2 7.2 0 1 0 26.3 27.2" fill="none" stroke="#fff" stroke-width="1.5"/><path d="M20.5 19.3 V23 L22.8 25.4" fill="none" stroke="#fff" stroke-width="1.5" stroke-linecap="round"/><path d="M25.3 21.1 H30.4 M25.3 23.8 H27.6" stroke="#fff" stroke-width="1.4"/></g></svg>
<svg class="s" style="left:2143px;top:852.0px;" width="42" height="42" viewBox="0 0 42 42"><circle cx="21" cy="21" r="21" fill="#ff4d4f"/><g transform="translate(0,-0.9)"><path d="M13 18.1 H28.2" stroke="#fff" stroke-width="1.7"/><path d="M17.2 18.1 V15.6 Q17.2 14.6 18.2 14.6 H23.3 Q24.3 14.6 24.3 15.6 V18.1" fill="none" stroke="#fff" stroke-width="1.5"/><path d="M15.2 18.1 L16.1 30.1 H25.3 L26.2 18.1" fill="none" stroke="#fff" stroke-width="1.7" stroke-linejoin="round"/></g></svg>
<svg class="s" style="left:2192px;top:852.0px;" width="42" height="42" viewBox="0 0 42 42"><circle cx="21" cy="21" r="21" fill="#1890ff"/><g transform="translate(0,-0.9)"><rect x="18.95" y="14.15" width="5.1" height="4.9" fill="none" stroke="#fff" stroke-width="1.7"/><rect x="13.85" y="25.85" width="5" height="4.9" fill="none" stroke="#fff" stroke-width="1.7"/><rect x="24.05" y="25.85" width="5.1" height="4.9" fill="none" stroke="#fff" stroke-width="1.7"/><path d="M21.5 19.9 V23.2 M16.35 25 V23.2 H26.6 V25" fill="none" stroke="#fff" stroke-width="1.5"/></g></svg>
<svg class="s" style="left:2242px;top:852.0px;" width="42" height="42" viewBox="0 0 42 42"><circle cx="21" cy="21" r="21" fill="#1890ff"/><g transform="translate(0,-0.9)"><path d="M27.7 17.2 V15.4 H13.3 V29.8 H27.7 V27.9" fill="none" stroke="#fff" stroke-width="1.7"/><path d="M19 22.4 H26" stroke="#fff" stroke-width="1.5"/><path d="M28.9 22.4 L25.2 20.2 V24.7 Z" fill="#fff"/></g></svg>
<svg class="s" style="left:2291px;top:852.0px;" width="42" height="42" viewBox="0 0 42 42"><circle cx="21" cy="21" r="21" fill="#1890ff"/><g transform="translate(0,-0.9)"><circle cx="21.4" cy="22.4" r="9.3" fill="#fff"/><circle cx="21.4" cy="18.8" r="1.05" fill="#1890ff"/><path d="M21.4 21.6 V26.7" stroke="#1890ff" stroke-width="1.5" stroke-linecap="round"/></g></svg>
<div class="b" style="left:477px;top:941px;width:24px;height:24px;background:#f9f9fb;box-shadow:inset 0 0 0 1px #dcdce2;border-radius:3.5px;"></div>
<div class="t" style="left:538px;top:942.11px;font-size:19.3px;line-height:19.3px;color:#333639;">7</div>
<div class="t" style="left:613.60px;top:936.13px;height:20.72px;overflow:hidden;font-size:22px;line-height:22px;letter-spacing:-0.331px;color:#1890ff;">test_dag_copy_202...</div>
<svg class="s" style="left:858.3px;top:942px;" width="18" height="23" viewBox="0 0 18 23"><path d="M4.6 1.1 H16.1 V18.4" fill="none" stroke="#1890ff" stroke-width="1.7"/><path d="M1.3 4.5 H12.2 V21 H4.6 L1.3 17.7 Z" fill="none" stroke="#1890ff" stroke-width="1.7" stroke-linejoin="round"/><path d="M1.3 17.7 H4.6 V21" fill="none" stroke="#1890ff" stroke-width="1.5"/></svg>
<div class="t" style="left:915.1px;top:942.41px;font-size:19.3px;line-height:19.3px;color:#333639;letter-spacing:0.021px;">Online</div>
<div class="t" style="left:1096.6px;top:942.41px;font-size:19.3px;line-height:19.3px;color:#333639;letter-spacing:-0.218px;">2022-05-09 16:43:33</div>
<div class="t" style="left:1368.2px;top:942.41px;font-size:19.3px;line-height:19.3px;color:#333639;letter-spacing:-0.218px;">2022-05-09 16:43:33</div>
<svg class="s" style="left:1846px;top:931.0px;" width="42" height="42" viewBox="0 0 42 42"><circle cx="21" cy="21" r="21" fill="#8cc8ff"/><g transform="translate(0,-0.9)"><path d="M20.5 15.1 H13 V29.7 H28 V22.3" fill="none" stroke="#fff" stroke-width="1.8" stroke-linejoin="round"/><path d="M18.3 24.9 L27.6 15.7" stroke="#fff" stroke-width="3.6" stroke-linecap="round"/><path d="M18.3 24.9 L27.6 15.7" stroke="#8cc8ff" stroke-width="1.1" stroke-linecap="round"/></g></svg>
<svg class="s" style="left:1895px;top:931.0px;" width="42" height="42" viewBox="0 0 42 42"><circle cx="21" cy="21" r="21" fill="#1890ff"/><g transform="translate(0,-0.9)"><circle cx="21.4" cy="22.4" r="8.3" fill="none" stroke="#fff" stroke-width="1.5"/><path d="M20.1 18.6 V26.3 L25.1 22.4 Z" fill="none" stroke="#fff" stroke-width="1.5" stroke-linejoin="round"/></g></svg>
<svg class="s" style="left:1945px;top:931.0px;" width="42" height="42" viewBox="0 0 42 42"><circle cx="21" cy="21" r="21" fill="#1890ff"/><g transform="translate(0,-0.9)"><circle cx="20.5" cy="21.5" r="8.3" fill="none" stroke="#fff" stroke-width="1.5"/><path d="M20.2 17 V21.6 L24 24.9" fill="none" stroke="#fff" stroke-width="1.5" stroke-linecap="round"/></g></svg>
<svg class="s" style="left:1994px;top:931.0px;" width="42" height="42" viewBox="0 0 42 42"><circle cx="21" cy="21" r="21" fill="#faad14"/><path d="M14.8 23.5 V27.8 H28.3 V23.5" fill="none" stroke="#fff" stroke-width="1.7"/><path d="M21.5 13.5 V21" stroke="#fff" stroke-width="1.5"/><path d="M21.5 23.6 L24 20.2 H19 Z" fill="#fff"/></svg>
<svg class="s" style="left:2044px;top:931.0px;" width="42" height="42" viewBox="0 0 42 42"><circle cx="21" cy="21" r="21" fill="#8cc8ff"/><g transform="translate(0,-0.9)"><path d="M16 13.8 H27.9 V29" fill="none" stroke="#fff" stroke-width="1.7"/><path d="M13.9 16.8 H24.1 V30.8 H17.3 L13.9 27.4 Z" fill="none" stroke="#fff" stroke-width="1.7" stroke-linejoin="round"/><circle cx="16.4" cy="28.4" r="0.9" fill="#fff"/></g></svg>
<svg class="s" style="left:2093px;top:931.0px;" width="42" height="42" viewBox="0 0 42 42"><circle cx="21" cy="21" r="21" fill="#1890ff"/><g transform="translate(0,-0.9)"><path d="M26.3 17.6 A 7.2 7.2 0 1 0 26.3 27.2" fill="none" stroke="#fff" stroke-width="1.5"/><path d="M20.5 19.3 V23 L22.8 25.4" fill="none" stroke="#fff" stroke-width="1.5" stroke-linecap="round"/><path d="M25.3 21.1 H30.4 M25.3 23.8 H27.6" stroke="#fff" stroke-width="1.4"/></g></svg>
<svg class="s" style="left:2143px;top:931.0px;" width="42" height="42" viewBox="0 0 42 42"><circle cx="21" cy="21" r="21" fill="#ffa6a7"/><g transform="translate(0,-0.9)"><path d="M13 18.1 H28.2" stroke="#fff" stroke-width="1.7"/><path d="M17.2 18.1 V15.6 Q17.2 14.6 18.2 14.6 H23.3 Q24.3 14.6 24.3 15.6 V18.1" fill="none" stroke="#fff" stroke-width="1.5"/><path d="M15.2 18.1 L16.1 30.1 H25.3 L26.2 18.1" fill="none" stroke="#fff" stroke-width="1.7" stroke-linejoin="round"/></g></svg>
<svg class="s" style="left:2192px;top:931.0px;" width="42" height="42" viewBox="0 0 42 42"><circle cx="21" cy="21" r="21" fill="#1890ff"/><g transform="translate(0,-0.9)"><rect x="18.95" y="14.15" width="5.1" height="4.9" fill="none" stroke="#fff" stroke-width="1.7"/><rect x="13.85" y="25.85" width="5" height="4.9" fill="none" stroke="#fff" stroke-width="1.7"/><rect x="24.05" y="25.85" width="5.1" height="4.9" fill="none" stroke="#fff" stroke-width="1.7"/><path d="M21.5 19.9 V23.2 M16.35 25 V23.2 H26.6 V25" fill="none" stroke="#fff" stroke-width="1.5"/></g></svg>
<svg class="s" style="left:2242px;top:931.0px;" width="42" height="42" viewBox="0 0 42 42"><circle cx="21" cy="21" r="21" fill="#1890ff"/><g transform="translate(0,-0.9)"><path d="M27.7 17.2 V15.4 H13.3 V29.8 H27.7 V27.9" fill="none" stroke="#fff" stroke-width="1.7"/><path d="M19 22.4 H26" stroke="#fff" stroke-width="1.5"/><path d="M28.9 22.4 L25.2 20.2 V24.7 Z" fill="#fff"/></g></svg>
<svg class="s" style="left:2291px;top:931.0px;" width="42" height="42" viewBox="0 0 42 42"><circle cx="21" cy="21" r="21" fill="#1890ff"/><g transform="translate(0,-0.9)"><circle cx="21.4" cy="22.4" r="9.3" fill="#fff"/><circle cx="21.4" cy="18.8" r="1.05" fill="#1890ff"/><path d="M21.4 21.6 V26.7" stroke="#1890ff" stroke-width="1.5" stroke-linecap="round"/></g></svg>
<div class="b" style="left:477px;top:1020px;width:24px;height:24px;background:#fff;box-shadow:inset 0 0 0 1px #dcdce2;border-radius:3.5px;"></div>
<div class="t" style="left:538px;top:1021.61px;font-size:19.3px;line-height:19.3px;color:#333639;">8</div>
<div class="t" style="left:613.60px;top:1015.63px;height:20.72px;overflow:hidden;font-size:22px;line-height:22px;letter-spacing:-0.331px;color:#1890ff;">test_dag_copy_202...</div>
<svg class="s" style="left:858.3px;top:1021px;" width="18" height="23" viewBox="0 0 18 23"><path d="M4.6 1.1 H16.1 V18.4" fill="none" stroke="#1890ff" stroke-width="1.7"/><path d="M1.3 4.5 H12.2 V21 H4.6 L1.3 17.7 Z" fill="none" stroke="#1890ff" stroke-width="1.7" stroke-linejoin="round"/><path d="M1.3 17.7 H4.6 V21" fill="none" stroke="#1890ff" stroke-width="1.5"/></svg>
<div class="t" style="left:915.1px;top:1021.91px;font-size:19.3px;line-height:19.3px;color:#333639;letter-spacing:0.295px;">Offline</div>
<div class="t" style="left:1096.6px;top:1021.91px;font-size:19.3px;line-height:19.3px;color:#333639;letter-spacing:-0.218px;">2022-05-09 16:43:33</div>
<div class="t" style="left:1368.2px;top:1021.91px;font-size:19.3px;line-height:19.3px;color:#333639;letter-spacing:-0.218px;">2022-05-09 16:43:33</div>
<svg class="s" style="left:1846px;top:1011.0px;" width="42" height="42" viewBox="0 0 42 42"><circle cx="21" cy="21" r="21" fill="#1890ff"/><g transform="translate(0,-0.9)"><path d="M20.5 15.1 H13 V29.7 H28 V22.3" fill="none" stroke="#fff" stroke-width="1.8" stroke-linejoin="round"/><path d="M18.3 24.9 L27.6 15.7" stroke="#fff" stroke-width="3.6" stroke-linecap="round"/><path d="M18.3 24.9 L27.6 15.7" stroke="#1890ff" stroke-width="1.1" stroke-linecap="round"/></g></svg>
<svg class="s" style="left:1895px;top:1011.0px;" width="42" height="42" viewBox="0 0 42 42"><circle cx="21" cy="21" r="21" fill="#8cc8ff"/><g transform="translate(0,-0.9)"><circle cx="21.4" cy="22.4" r="8.3" fill="none" stroke="#fff" stroke-width="1.5"/><path d="M20.1 18.6 V26.3 L25.1 22.4 Z" fill="none" stroke="#fff" stroke-width="1.5" stroke-linejoin="round"/></g></svg>
<svg class="s" style="left:1945px;top:1011.0px;" width="42" height="42" viewBox="0 0 42 42"><circle cx="21" cy="21" r="21" fill="#8cc8ff"/><g transform="translate(0,-0.9)"><circle cx="20.5" cy="21.5" r="8.3" fill="none" stroke="#fff" stroke-width="1.5"/><path d="M20.2 17 V21.6 L24 24.9" fill="none" stroke="#fff" stroke-width="1.5" stroke-linecap="round"/></g></svg>
<svg class="s" style="left:1994px;top:1011.0px;" width="42" height="42" viewBox="0 0 42 42"><circle cx="21" cy="21" r="21" fill="#ff4d4f"/><g transform="translate(0,-0.9)"><path d="M14.8 24.8 V29 H28.3 V24.8" fill="none" stroke="#fff" stroke-width="1.7"/><path d="M21.5 25.5 V17.5" stroke="#fff" stroke-width="1.5"/><path d="M21.5 15 L24 18.6 H19 Z" fill="#fff"/></g></svg>
<svg class="s" style="left:2044px;top:1011.0px;" width="42" height="42" viewBox="0 0 42 42"><circle cx="21" cy="21" r="21" fill="#1890ff"/><g transform="translate(0,-0.9)"><path d="M16 13.8 H27.9 V29" fill="none" stroke="#fff" stroke-width="1.7"/><path d="M13.9 16.8 H24.1 V30.8 H17.3 L13.9 27.4 Z" fill="none" stroke="#fff" stroke-width="1.7" stroke-linejoin="round"/><circle cx="16.4" cy="28.4" r="0.9" fill="#fff"/></g></svg>
<svg class="s" style="left:2093px;top:1011.0px;" width="42" height="42" viewBox="0 0 42 42"><circle cx="21" cy="21" r="21" fill="#8cc8ff"/><g transform="translate(0,-0.9)"><path d="M26.3 17.6 A 7.2 7.2 0 1 0 26.3 27.2" fill="none" stroke="#fff" stroke-width="1.5"/><path d="M20.5 19.3 V23 L22.8 25.4" fill="none" stroke="#fff" stroke-width="1.5" stroke-linecap="round"/><path d="M25.3 21.1 H30.4 M25.3 23.8 H27.6" stroke="#fff" stroke-width="1.4"/></g></svg>
<svg class="s" style="left:2143px;top:1011.0px;" width="42" height="42" viewBox="0 0 42 42"><circle cx="21" cy="21" r="21" fill="#ff4d4f"/><g transform="translate(0,-0.9)"><path d="M13 18.1 H28.2" stroke="#fff" stroke-width="1.7"/><path d="M17.2 18.1 V15.6 Q17.2 14.6 18.2 14.6 H23.3 Q24.3 14.6 24.3 15.6 V18.1" fill="none" stroke="#fff" stroke-width="1.5"/><path d="M15.2 18.1 L16.1 30.1 H25.3 L26.2 18.1" fill="none" stroke="#fff" stroke-width="1.7" stroke-linejoin="round"/></g></svg>
<svg class="s" style="left:2192px;top:1011.0px;" width="42" height="42" viewBox="0 0 42 42"><circle cx="21" cy="21" r="21" fill="#1890ff"/><g transform="translate(0,-0.9)"><rect x="18.95" y="14.15" width="5.1" height="4.9" fill="none" stroke="#fff" stroke-width="1.7"/><rect x="13.85" y="25.85" width="5" height="4.9" fill="none" stroke="#fff" stroke-width="1.7"/><rect x="24.05" y="25.85" width="5.1" height="4.9" fill="none" stroke="#fff" stroke-width="1.7"/><path d="M21.5 19.9 V23.2 M16.35 25 V23.2 H26.6 V25" fill="none" stroke="#fff" stroke-width="1.5"/></g></svg>
<svg class="s" style="left:2242px;top:1011.0px;" width="42" height="42" viewBox="0 0 42 42"><circle cx="21" cy="21" r="21" fill="#1890ff"/><g transform="translate(0,-0.9)"><path d="M27.7 17.2 V15.4 H13.3 V29.8 H27.7 V27.9" fill="none" stroke="#fff" stroke-width="1.7"/><path d="M19 22.4 H26" stroke="#fff" stroke-width="1.5"/><path d="M28.9 22.4 L25.2 20.2 V24.7 Z" fill="#fff"/></g></svg>
<svg class="s" style="left:2291px;top:1011.0px;" width="42" height="42" viewBox="0 0 42 42"><circle cx="21" cy="21" r="21" fill="#1890ff"/><g transform="translate(0,-0.9)"><circle cx="21.4" cy="22.4" r="9.3" fill="#fff"/><circle cx="21.4" cy="18.8" r="1.05" fill="#1890ff"/><path d="M21.4 21.6 V26.7" stroke="#1890ff" stroke-width="1.5" stroke-linecap="round"/></g></svg>
<svg class="s" style="left:1990px;top:355px;" width="40" height="95" viewBox="0 0 40 95"><path d="M20.4 6.8 L21.8 6.8 L28.3 77 L33.4 74.6 L25.5 91.5 L15.8 76 L19.7 77.5 Z" fill="#1eab1e"/></svg>
<div class="b" style="left:458px;top:1090px;width:106px;height:51px;background:#8cc8ff;border-radius:4px;"></div>
<div class="t" style="left:479.5px;top:1104.38px;font-size:22px;line-height:22px;color:#fff;letter-spacing:-0.020px;">Delete</div>
<div class="b" style="left:572px;top:1090px;width:107px;height:51px;background:#8cc8ff;border-radius:4px;"></div>
<div class="t" style="left:593.9px;top:1104.38px;font-size:22px;line-height:22px;color:#fff;letter-spacing:0.204px;">Export</div>
<div class="b" style="left:687px;top:1090px;width:156px;height:51px;background:#8cc8ff;border-radius:4px;"></div>
<div class="t" style="left:709.2px;top:1104.38px;font-size:22px;line-height:22px;color:#fff;letter-spacing:-0.113px;">Batch Copy</div>
<div class="b" style="left:1182px;top:1102px;width:42px;height:42px;background:#fafafc;box-shadow:inset 0 0 0 1px #e0e0e6;border-radius:4px;"></div>
<div class="b" style="left:1236px;top:1102px;width:42px;height:42px;background:#fff;box-shadow:inset 0 0 0 1.5px #1890ff;border-radius:4px;"></div>
<div class="b" style="left:1290px;top:1102px;width:42px;height:42px;background:#fafafc;box-shadow:inset 0 0 0 1px #e0e0e6;border-radius:4px;"></div>
<svg class="s" style="left:1197px;top:1115px;" width="10" height="16" viewBox="0 0 10 16"><path d="M8 1 L2 8 L8 15" fill="none" stroke="#b8b8bb" stroke-width="1.6"/></svg>
<svg class="s" style="left:1307px;top:1115px;" width="10" height="16" viewBox="0 0 10 16"><path d="M2 1 L8 8 L2 15" fill="none" stroke="#b8b8bb" stroke-width="1.6"/></svg>
<div class="t" style="left:1253.1px;top:1112.38px;font-size:22px;line-height:22px;color:#1890ff;letter-spacing:0.000px;">1</div>
<div class="b" style="left:1344px;top:1102px;width:154px;height:42px;background:#fff;box-shadow:inset 0 0 0 1px #e0e0e6;border-radius:4px;"></div>
<div class="t" style="left:1364.3px;top:1112.38px;font-size:22px;line-height:22px;color:#1f2225;letter-spacing:0.233px;">10 / page</div>
<svg class="s" style="left:1464.5px;top:1119px;" width="16" height="10" viewBox="0 0 16 10"><path d="M1 1 L8 8.5 L15 1" fill="none" stroke="#c2c2c2" stroke-width="1.6"/></svg>
<div class="t" style="left:1510.7px;top:1112.38px;font-size:22px;line-height:22px;color:#1f2225;letter-spacing:0.035px;">Goto</div>
<div class="b" style="left:1572px;top:1102px;width:90px;height:42px;background:#fff;box-shadow:inset 0 0 0 1px #e0e0e6;border-radius:4px;"></div>
<div class="b" style="left:0px;top:1392px;width:2435px;height:1px;background:#fff;"></div>
<div class="b" style="left:0px;top:1393px;width:2435px;height:1px;background:#000;"></div>
</body></html>
